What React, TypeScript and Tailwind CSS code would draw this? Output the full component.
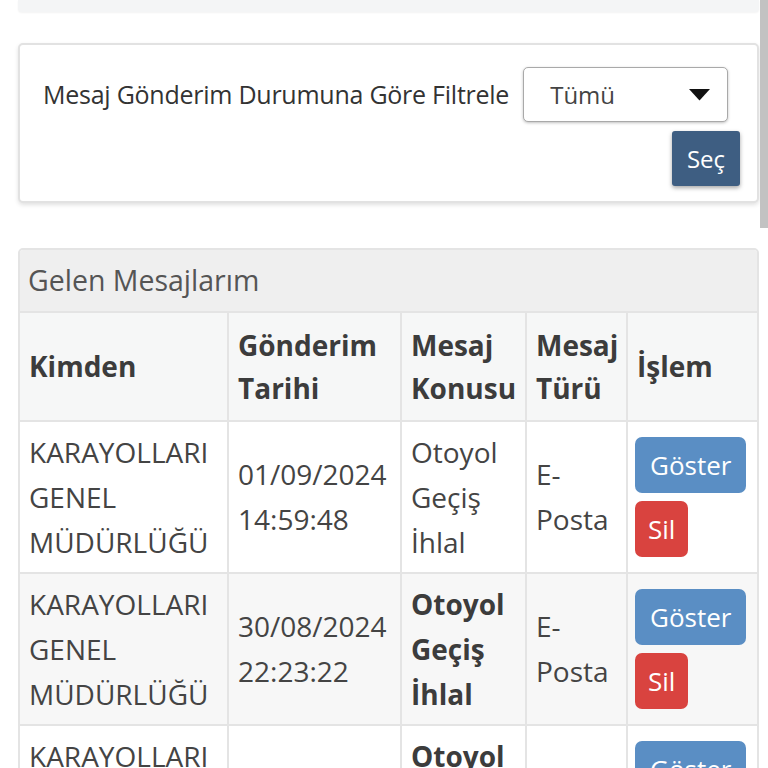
import React from "react"

type Row = {
    from: string[]
    date: string
    time: string
    subject: string[]
    unread: boolean
    kind: string[]
}

const rows: Row[] = [
    { from: ["KARAYOLLARI", "GENEL", "MÜDÜRLÜĞÜ"], date: "01/09/2024", time: "14:59:48", subject: ["Otoyol", "Geçiş", "İhlal"], unread: false, kind: ["E-", "Posta"] },
    { from: ["KARAYOLLARI", "GENEL", "MÜDÜRLÜĞÜ"], date: "30/08/2024", time: "22:23:22", subject: ["Otoyol", "Geçiş", "İhlal"], unread: true, kind: ["E-", "Posta"] },
    { from: ["KARAYOLLARI", "GENEL", "MÜDÜRLÜĞÜ"], date: "28/08/2024", time: "09:12:05", subject: ["Otoyol", "Geçiş", "İhlal"], unread: true, kind: ["E-", "Posta"] },
]

const Lines: React.FC<{ items: string[] }> = ({ items }) => (
    <>
        {items.map((t, i) => (
            <div key={i}>{t}</div>
        ))}
    </>
)

const td = "border-2 border-[#e4e4e4] px-[9px] py-[7px] align-middle"
const th = "border-2 border-[#e4e4e4] px-[9px] py-[10.5px] align-middle leading-[43px]"

export default function App() {
    return (
        <div
            className="relative min-h-[768px] bg-white pl-[18px] pr-[9px] text-[#444]"
            style={{ fontFamily: "'Open Sans', 'Noto Sans', sans-serif" }}
        >
            {/* scrollbar */}
            <div className="absolute right-0 top-0 h-[228px] w-[8px] bg-[#c2c2c2]" />

            {/* bottom of previous panel */}
            <div className="h-[12px] rounded-b-[4px] bg-[#f4f5f6] shadow-[0_1px_2px_rgba(0,0,0,0.05)]" />

            {/* filter card */}
            <div className="mt-[31px] rounded-[5px] border-2 border-[#e2e2e2] bg-white pb-[15px] pl-[23px] pr-[17px] pt-[22px] shadow-[0_2px_4px_rgba(0,0,0,0.12)]">
                <div className="flex items-center">
                    <span className="text-[25px] leading-none tracking-[-0.25px] text-[#333]">Mesaj Gönderim Durumuna Göre Filtrele</span>
                    <div className="ml-[14px] flex h-[55px] w-[205px] items-center justify-between rounded-[5px] border-[1.5px] border-[#a9a9a9] bg-white pl-[26px] pr-[17px] shadow-[0_1px_3px_rgba(0,0,0,0.25)]">
                        <span className="text-[24px] text-[#444]">Tümü</span>
                        <svg width="21" height="12" viewBox="0 0 21 12">
                            <path d="M0 0 H21 L10.5 11.5 Z" fill="#111" />
                        </svg>
                    </div>
                </div>
                <div className="mt-[9px] flex justify-end">
                    <button className="h-[55px] w-[68px] rounded-[3px] bg-[#3e5e82] text-[24px] text-white shadow-[0_2px_4px_rgba(0,0,0,0.35)]">
                        Seç
                    </button>
                </div>
            </div>

            {/* messages card */}
            <div className="mt-[45px] overflow-hidden rounded-[5px] border-2 border-[#e4e4e4] bg-white">
                <div className="flex h-[61px] items-center bg-[#efefef] pl-[8px] text-[28.5px] text-[#555] shadow-[0_2px_3px_rgba(0,0,0,0.1)]">
                    Gelen Mesajlarım
                </div>
                <table className="-mx-[2px] w-[calc(100%+4px)] table-fixed border-collapse text-[28px] leading-[45px]">
                    <colgroup>
                        <col className="w-[209px]" />
                        <col className="w-[173px]" />
                        <col className="w-[125px]" />
                        <col className="w-[101px]" />
                        <col />
                    </colgroup>
                    <thead>
                        <tr className="bg-[#f6f7f7] text-left font-bold text-[#3c3c3c]">
                            <th className={th}>Kimden</th>
                            <th className={th}>Gönderim Tarihi</th>
                            <th className={th}>Mesaj Konusu</th>
                            <th className={th}>Mesaj Türü</th>
                            <th className={th}>İşlem</th>
                        </tr>
                    </thead>
                    <tbody>
                        {rows.map((r, i) => (
                            <tr key={i} className={i % 2 === 1 ? "bg-[#f7f7f7]" : "bg-white"}>
                                <td className={td}>
                                    <Lines items={r.from} />
                                </td>
                                <td className={td}>
                                    <Lines items={[r.date, r.time]} />
                                </td>
                                <td className={`${td} ${r.unread ? "font-bold text-[#3c3c3c]" : ""}`}>
                                    <Lines items={r.subject} />
                                </td>
                                <td className={td}>
                                    <Lines items={r.kind} />
                                </td>
                                <td className={`${td} pl-[7px]`}>
                                    <div className="flex flex-col items-start gap-[8px] py-[8px]">
                                        <button className="h-[56px] rounded-[7px] bg-[#5a8ec4] px-[15px] text-[26px] leading-none text-white">
                                            Göster
                                        </button>
                                        <button className="h-[56px] rounded-[7px] bg-[#d9433f] px-[13px] text-[26px] leading-none text-white">
                                            Sil
                                        </button>
                                    </div>
                                </td>
                            </tr>
                        ))}
                    </tbody>
                </table>
            </div>
        </div>
    )
}
